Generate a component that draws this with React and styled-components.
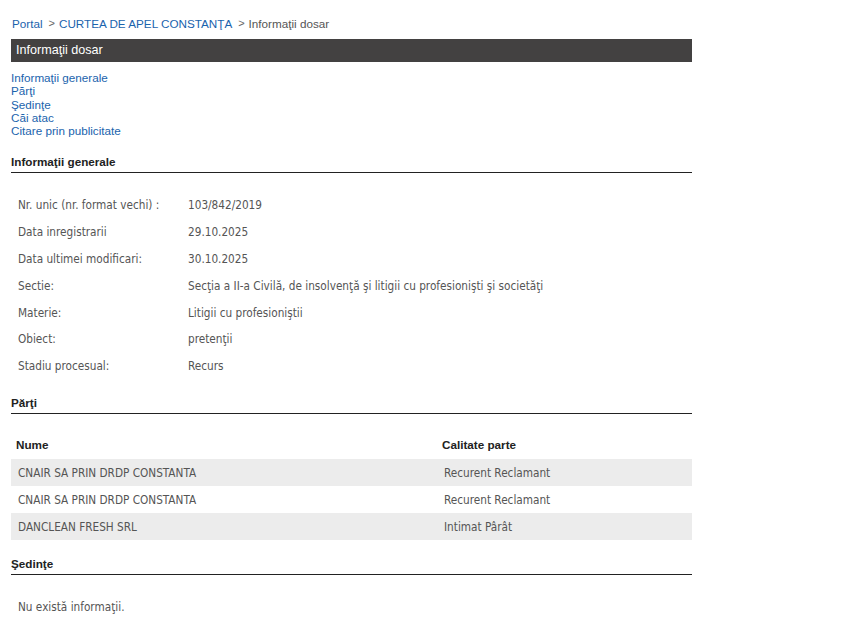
import React from "react";
import styled, { createGlobalStyle } from "styled-components";

const Global = createGlobalStyle`
  html, body { margin: 0; padding: 0; background: #fff; }
  body { font-family: "Liberation Sans", Arial, sans-serif; font-size: 12px; color: #222; }
`;

const Page = styled.div`
  width: 681px;
  padding: 16px 0 0 11px;
`;

const Crumbs = styled.div`
  display: flex;
  align-items: center;
  height: 14px;
  padding-left: 1px;
  font-size: 11.7px;
  color: #555;
  margin-bottom: 9px;
`;

const CrumbLink = styled.a`
  color: #1a63ad;
  text-decoration: none;
`;

const Sep = styled.span`
  margin: 0 4px 0 6px;
  font-size: 11px;
  color: #666;
`;

const TitleBar = styled.div`
  height: 23px;
  background: #434141;
  color: #fff;
  font-size: 12.6px;
  line-height: 23px;
  padding-left: 5px;
`;

const Nav = styled.nav`
  display: flex;
  flex-direction: column;
  margin-top: 9px;
  margin-bottom: 17px;
`;

const NavLink = styled.a`
  color: #1a63ad;
  text-decoration: none;
  font-size: 11.7px;
  line-height: 13.3px;
`;

const SectionTitle = styled.h3`
  margin: 0;
  font-size: 11.7px;
  font-weight: bold;
  color: #222;
  height: 16px;
  line-height: 16px;
  padding-bottom: 2px;
  border-bottom: 1px solid #222;
`;

const dataFont = `
  font-family: "DejaVu Sans Condensed", "DejaVu Sans", Tahoma, sans-serif;
  font-size: 11.7px;
  color: #555;
`;

const InfoGrid = styled.div`
  display: grid;
  grid-template-columns: 170px 1fr;
  margin-top: 19px;
  margin-bottom: 15px;
  ${dataFont}
`;

const Cell = styled.div`
  height: 26.8px;
  line-height: 26.8px;
  padding-left: 7px;
  white-space: nowrap;
`;

const Table = styled.div`
  margin-top: 15px;
  margin-bottom: 16px;
`;

const Row = styled.div`
  display: grid;
  grid-template-columns: 426px 1fr;
  height: ${(p) => (p.$head ? "30px" : "27px")};
  align-items: center;
  background: ${(p) => (p.$shaded ? "#ececec" : "transparent")};
`;

const HeadCell = styled.div`
  font-family: "Liberation Sans", Arial, sans-serif;
  font-weight: bold;
  font-size: 11.7px;
  color: #222;
  padding-left: 5px;
`;

const DataCell = styled.div`
  ${dataFont}
  padding-left: 7px;
  white-space: nowrap;
`;

const Empty = styled.div`
  margin-top: 25px;
  padding-left: 7px;
  ${dataFont}
`;

const info = [
  ["Nr. unic (nr. format vechi) :", "103/842/2019"],
  ["Data inregistrarii", "29.10.2025"],
  ["Data ultimei modificari:", "30.10.2025"],
  ["Sectie:", "Secţia a II-a Civilă, de insolvenţă şi litigii cu profesionişti şi societăţi"],
  ["Materie:", "Litigii cu profesioniştii"],
  ["Obiect:", "pretenţii"],
  ["Stadiu procesual:", "Recurs"],
];

const parti = [
  ["CNAIR SA PRIN DRDP CONSTANTA", "Recurent Reclamant"],
  ["CNAIR SA PRIN DRDP CONSTANTA", "Recurent Reclamant"],
  ["DANCLEAN FRESH SRL", "Intimat Pârât"],
];

export default function App() {
  return (
    <>
      <Global />
      <Page>
        <Crumbs>
          <CrumbLink href="#">Portal</CrumbLink>
          <Sep>&gt;</Sep>
          <CrumbLink href="#">CURTEA DE APEL CONSTANŢA</CrumbLink>
          <Sep>&gt;</Sep>
          <span>Informaţii dosar</span>
        </Crumbs>
        <TitleBar>Informaţii dosar</TitleBar>
        <Nav>
          <NavLink href="#">Informaţii generale</NavLink>
          <NavLink href="#">Părţi</NavLink>
          <NavLink href="#">Şedinţe</NavLink>
          <NavLink href="#">Căi atac</NavLink>
          <NavLink href="#">Citare prin publicitate</NavLink>
        </Nav>

        <SectionTitle>Informaţii generale</SectionTitle>
        <InfoGrid>
          {info.map(([k, v]) => (
            <React.Fragment key={k}>
              <Cell>{k}</Cell>
              <Cell>{v}</Cell>
            </React.Fragment>
          ))}
        </InfoGrid>

        <SectionTitle>Părţi</SectionTitle>
        <Table>
          <Row $head>
            <HeadCell>Nume</HeadCell>
            <HeadCell>Calitate parte</HeadCell>
          </Row>
          {parti.map(([n, c], i) => (
            <Row key={i} $shaded={i % 2 === 0}>
              <DataCell>{n}</DataCell>
              <DataCell>{c}</DataCell>
            </Row>
          ))}
        </Table>

        <SectionTitle>Şedinţe</SectionTitle>
        <Empty>Nu există informaţii.</Empty>
      </Page>
    </>
  );
}
